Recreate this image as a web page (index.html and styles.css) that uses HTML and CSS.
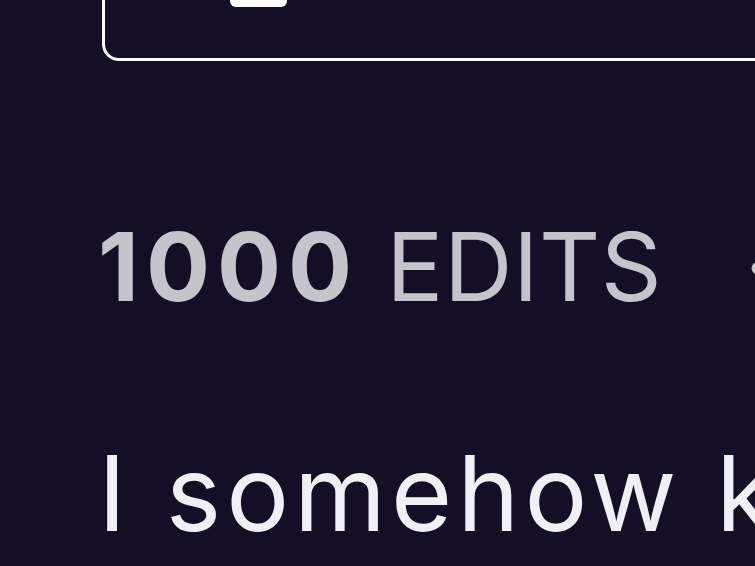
FILE: index.html
```html
<!DOCTYPE html>
<html lang="en">
<head>
<meta charset="utf-8">
<link rel="stylesheet" href="styles.css">
<title>Profile</title>
</head>
<body>
<main class="page">
  <div class="card">
    <div class="card-button"></div>
  </div>
  <div class="stats">
    <span class="stat"><b class="stat-num">1000</b> EDITS</span>
    <span class="sep">·</span>
  </div>
  <p class="bio">I somehow k</p>
</main>
</body>
</html>
```
FILE: styles.css
```css
html, body {
  margin: 0;
  padding: 0;
  background: #140f26;
  overflow: hidden;
  width: 755px;
  height: 566px;
}
.page {
  padding-left: 98px;
  font-family: Inter, "Noto Sans", sans-serif;
  white-space: nowrap;
}
.card {
  margin-top: -80px;
  margin-left: 4px;
  height: 141px;
  width: 900px;
  box-sizing: border-box;
  border: 3px solid #ffffff;
  border-radius: 17px;
  display: flex;
  align-items: flex-end;
  padding-left: 125px;
  padding-bottom: 51px;
}
.card-button {
  width: 57px;
  height: 40px;
  background: #ffffff;
  border-radius: 6px;
}
.stats {
  margin-top: 149px;
  font-size: 95px;
  line-height: 114px;
  letter-spacing: 0.5px;
  color: #c6c4cb;
  display: flex;
}
.stat-num {
  font-weight: 700;
  letter-spacing: 7px;
}
.sep {
  margin-left: 82px;
}
.bio {
  margin: 90px 0 0;
  font-size: 105px;
  line-height: 157px;
  letter-spacing: 5px;
  color: #f0eff3;
}
```
